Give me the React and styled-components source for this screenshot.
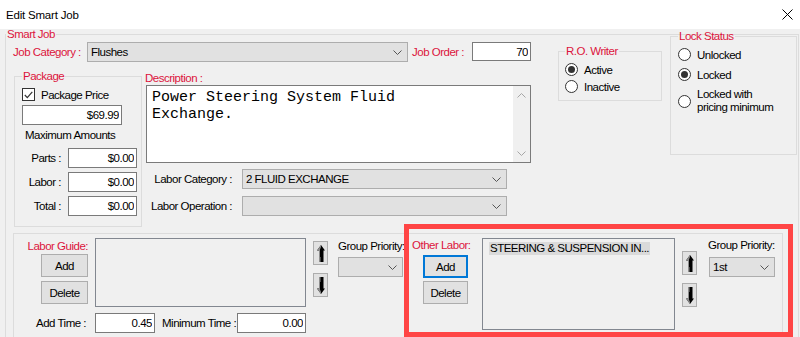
import React from "react";
import styled, { createGlobalStyle } from "styled-components";

const RED = "#dc143c";

const GlobalStyle = createGlobalStyle`
  body {
    margin: 0;
    background: #f0f0f0;
  }
  * {
    box-sizing: border-box;
  }
`;

const Window = styled.div`
  position: relative;
  width: 800px;
  height: 337px;
  overflow: hidden;
  background: #f0f0f0;
  font-family: "Liberation Sans", Arial, sans-serif;
  font-size: 11.5px;
  letter-spacing: -0.5px;
  color: #000;
  display: flex;
  flex-direction: column;
`;

const TitleBar = styled.div`
  flex: none;
  height: 29px;
  background: #fff;
  display: flex;
  align-items: center;
  justify-content: space-between;
  padding: 0 7px 0 6px;
  font-size: 11.5px;
  letter-spacing: -0.2px;
`;

const Body = styled.div`
  flex: 1;
  margin-top: -1px;
  padding-left: 5px;
`;

const GroupBox = styled.fieldset`
  flex: none;
  margin: ${({ $mt = 0, $ml = 0 }) => `${$mt}px 0 0 ${$ml}px`};
  padding: 0;
  min-width: 0;
  border: 1px solid #dcdcdc;
  width: ${({ $w }) => $w}px;
  height: ${({ $h }) => ($h ? `${$h}px` : "auto")};
`;

const Legend = styled.legend`
  padding: 0 1px;
  margin-left: ${({ $x }) => $x}px;
  line-height: 12px;
  color: ${RED};
`;

const OuterInner = styled.div`
  padding-left: 7px;
`;

const TopSection = styled.div`
  display: flex;
  align-items: flex-start;
`;

const LeftCol = styled.div`
  flex: none;
  width: 518px;
  display: flex;
  flex-direction: column;
`;

const JobRow = styled.div`
  margin-top: 2px;
  height: 20px;
  display: flex;
  align-items: center;
`;

const Label = styled.span`
  flex: none;
  line-height: 13px;
  white-space: nowrap;
  color: ${({ $red }) => ($red ? RED : "#000")};
  text-align: ${({ $right }) => ($right ? "right" : "left")};
  width: ${({ $w }) => ($w ? `${$w}px` : "auto")};
  margin-left: ${({ $ml = 0 }) => $ml}px;
  margin-top: ${({ $mt = 0 }) => $mt}px;
`;

const TextInput = styled.input`
  flex: none;
  width: ${({ $w }) => $w}px;
  height: ${({ $h = 20 }) => $h}px;
  margin: ${({ $mt = 0 }) => $mt}px 0 0 ${({ $ml = 0 }) => ($ml === "auto" ? "auto" : `${$ml}px`)};
  padding: 0 2px;
  border: 1px solid #7a7a7a;
  background: #fff;
  font: inherit;
  letter-spacing: inherit;
  color: #000;
  text-align: right;
  outline: none;
  align-self: ${({ $top }) => ($top ? "flex-start" : "auto")};
`;

const SelectBox = styled.div`
  flex: none;
  width: ${({ $w }) => $w}px;
  height: 20px;
  margin-top: ${({ $mt = 0 }) => $mt}px;
  margin-left: ${({ $ml = 0 }) => $ml}px;
  border: 1px solid #adadad;
  background: #e1e1e1;
  display: flex;
  align-items: center;
  padding: 0 5px 0 3px;
`;

const SelectValue = styled.span`
  flex: 1;
  white-space: nowrap;
  overflow: hidden;
`;

const Chevron = ({ down = true, color = "#555" }) => (
  <svg width="9" height="5" viewBox="0 0 9 5">
    <polyline
      points={down ? "0.5,0.5 4.5,4.5 8.5,0.5" : "0.5,4.5 4.5,0.5 8.5,4.5"}
      fill="none"
      stroke={color}
      strokeWidth="1"
    />
  </svg>
);

const Select = ({ w, value, mt, ml }) => (
  <SelectBox $w={w} $mt={mt} $ml={ml}>
    <SelectValue>{value}</SelectValue>
    <Chevron />
  </SelectBox>
);

const MidRow = styled.div`
  margin-top: 8px;
  display: flex;
  align-items: flex-start;
`;

const PackageInner = styled.div`
  padding-left: 7px;
  display: flex;
  flex-direction: column;
  align-items: flex-start;
`;

const CheckRow = styled.div`
  margin-top: 6px;
  display: flex;
  align-items: center;
  gap: 6px;
`;

const CheckBox = styled.span`
  flex: none;
  width: 13px;
  height: 13px;
  border: 1px solid #333;
  background: #fff;
  display: flex;
  align-items: center;
  justify-content: center;
`;

const AmountGrid = styled.div`
  margin-top: 6px;
  display: grid;
  grid-template-columns: 39px 69px;
  column-gap: 7px;
  row-gap: 4px;
  align-items: center;
`;

const DescCol = styled.div`
  flex: none;
  width: 386px;
  margin-left: 3px;
  display: flex;
  flex-direction: column;
`;

const DescBox = styled.div`
  margin-left: 1px;
  width: 385px;
  height: 78px;
  border: 1px solid #7a7a7a;
  background: #fff;
  display: flex;
`;

const DescText = styled.div`
  flex: 1;
  padding: 3px 0 0 5px;
  font-family: "Liberation Mono", "Courier New", monospace;
  font-size: 15px;
  line-height: 17px;
  letter-spacing: 0;
  white-space: pre-wrap;
`;

const ScrollTrack = styled.div`
  flex: none;
  width: 17px;
  background: #f0f0f0;
  display: flex;
  flex-direction: column;
  align-items: center;
  justify-content: space-between;
  padding: 7px 0 6px;
`;

const LaborGrid = styled.div`
  margin-top: 6px;
  display: grid;
  grid-template-columns: 87px 265px;
  column-gap: 10px;
  row-gap: 7px;
  align-items: center;
`;

const RadioInner = styled.div`
  padding: 6px 0 0 ${({ $pl }) => $pl}px;
  display: flex;
  flex-direction: column;
  gap: ${({ $gap }) => $gap}px;
`;

const RadioRow = styled.div`
  display: flex;
  align-items: center;
  gap: 6px;
`;

const Radio = styled.span`
  flex: none;
  width: 13px;
  height: 13px;
  border-radius: 50%;
  border: 1px solid #333;
  background: #fff;
  display: flex;
  align-items: center;
  justify-content: center;
  &::after {
    content: "";
    width: 7px;
    height: 7px;
    border-radius: 50%;
    background: ${({ $checked }) => ($checked ? "#333" : "transparent")};
  }
`;

const LowerGroup = styled.div`
  margin-top: 6px;
  width: 770px;
  height: 112px;
  border: 1px solid #dcdcdc;
  padding-top: 4px;
  display: flex;
  align-items: flex-start;
`;

const Cluster = styled.div`
  flex: none;
  display: flex;
  flex-direction: column;
  margin-left: ${({ $ml = 0 }) => $ml}px;
`;

const ClusterTop = styled.div`
  display: flex;
  align-items: flex-start;
`;

const ButtonCol = styled.div`
  flex: none;
  width: ${({ $w }) => $w}px;
  display: flex;
  flex-direction: column;
  align-items: ${({ $right }) => ($right ? "flex-end" : "flex-start")};
`;

const Button = styled.button`
  flex: none;
  width: ${({ $w }) => $w}px;
  height: 23px;
  margin: ${({ $mt = 0 }) => $mt}px 0 0 ${({ $ml = 0 }) => $ml}px;
  padding: 0;
  background: #e1e1e1;
  border: 1px solid ${({ $focused }) => ($focused ? "#0078d7" : "#adadad")};
  box-shadow: ${({ $focused }) => ($focused ? "inset 0 0 0 1px #0078d7" : "none")};
  font: inherit;
  letter-spacing: inherit;
  color: #000;
`;

const ListBox = styled.div`
  flex: none;
  width: ${({ $w }) => $w}px;
  height: ${({ $h }) => $h}px;
  margin-left: ${({ $ml }) => $ml}px;
  border: 1px solid #828790;
  background: #f0f0f0;
`;

const ListItem = styled.span`
  display: inline-block;
  margin: 3px 0 0 6px;
  padding: 0 1px;
  line-height: 13px;
  background: #dadada;
  white-space: nowrap;
`;

const ArrowCol = styled.div`
  flex: none;
  margin: ${({ $mt }) => $mt}px 0 0 7px;
  display: flex;
  flex-direction: column;
  gap: 8px;
`;

const ArrowButton = styled.div`
  width: 15px;
  height: 24px;
  background: #e1e1e1;
  border: 1px solid #adadad;
  display: flex;
  align-items: center;
  justify-content: center;
  svg {
    transform: ${({ $down }) => ($down ? "scaleY(-1)" : "none")};
  }
`;

const MoveArrow = ({ down }) => (
  <ArrowButton $down={down}>
    <svg width="8" height="17" viewBox="0 0 8 17">
      <path d="M4 0 L8 5.5 L6.5 5.5 L6.5 17 L2 17 L2 5.5 L0 5.5 Z" fill="#000" />
      <path d="M4 0 L0 5.5 L2 5.5 L2 17 L3.5 17 L3.5 12 L3 12 L3 4.5 L4 2 Z" fill="#8c8c8c" />
    </svg>
  </ArrowButton>
);

const PriorityCol = styled.div`
  flex: none;
  width: ${({ $w }) => $w}px;
  margin-left: ${({ $ml }) => $ml}px;
  display: flex;
  flex-direction: column;
`;

const TimeRow = styled.div`
  margin-top: 6px;
  width: 292px;
  display: flex;
  align-items: center;
`;

const Highlight = styled.div`
  position: absolute;
  left: 404px;
  top: 224px;
  width: 389px;
  height: 113px;
  border: 5px solid #ff4545;
  pointer-events: none;
`;

const CloseIcon = () => (
  <svg width="11" height="11" viewBox="0 0 11 11">
    <path d="M0.5 0.5 L10.5 10.5 M10.5 0.5 L0.5 10.5" stroke="#000" strokeWidth="1" />
  </svg>
);

export default function App() {
  return (
    <Window>
      <GlobalStyle />
      <TitleBar>
        <span>Edit Smart Job</span>
        <CloseIcon />
      </TitleBar>
      <Body>
        <GroupBox $w={794} $h={330}>
          <Legend $x={0}>Smart Job</Legend>
          <OuterInner>
            <TopSection>
              <LeftCol>
                <JobRow>
                  <Label $red $w={74}>Job Category :</Label>
                  <Select w={321} value="Flushes" />
                  <Label $red $w={60} $ml={4}>Job Order :</Label>
                  <TextInput $w={59} $h={19} $top readOnly value="70" />
                </JobRow>
                <MidRow>
                  <GroupBox $w={128} $h={157} $ml={1}>
                    <Legend $x={7}>Package</Legend>
                    <PackageInner>
                      <CheckRow>
                        <CheckBox>
                          <svg width="9" height="8" viewBox="0 0 9 8">
                            <polyline points="0.8,4 3.3,6.6 8.3,0.8" fill="none" stroke="#333" strokeWidth="1.2" />
                          </svg>
                        </CheckBox>
                        <span>Package Price</span>
                      </CheckRow>
                      <TextInput $w={100} $mt={4} readOnly value="$69.99" />
                      <Label $ml={3} $mt={4}>Maximum Amounts</Label>
                      <AmountGrid>
                        <Label $right>Parts :</Label>
                        <TextInput $w={69} readOnly value="$0.00" />
                        <Label $right>Labor :</Label>
                        <TextInput $w={69} readOnly value="$0.00" />
                        <Label $right>Total :</Label>
                        <TextInput $w={69} readOnly value="$0.00" />
                      </AmountGrid>
                    </PackageInner>
                  </GroupBox>
                  <DescCol>
                    <Label $red $mt={2}>Description :</Label>
                    <DescBox>
                      <DescText>{"Power Steering System Fluid\nExchange."}</DescText>
                      <ScrollTrack>
                        <Chevron down={false} color="#a6a6a6" />
                        <Chevron color="#a6a6a6" />
                      </ScrollTrack>
                    </DescBox>
                    <LaborGrid>
                      <Label $right>Labor Category :</Label>
                      <Select w={265} value="2 FLUID EXCHANGE" />
                      <Label $right>Labor Operation :</Label>
                      <Select w={265} value="" />
                    </LaborGrid>
                  </DescCol>
                </MidRow>
              </LeftCol>

              <GroupBox $w={104} $h={56} $ml={27} $mt={5}>
                <Legend $x={6}>R.O. Writer</Legend>
                <RadioInner $pl={6} $gap={4}>
                  <RadioRow>
                    <Radio $checked />
                    <span>Active</span>
                  </RadioRow>
                  <RadioRow>
                    <Radio />
                    <span>Inactive</span>
                  </RadioRow>
                </RadioInner>
              </GroupBox>

              <GroupBox $w={127} $h={125} $ml={8} $mt={-10}>
                <Legend $x={7}>Lock Status</Legend>
                <RadioInner $pl={7} $gap={7}>
                  <RadioRow>
                    <Radio />
                    <span>Unlocked</span>
                  </RadioRow>
                  <RadioRow>
                    <Radio $checked />
                    <span>Locked</span>
                  </RadioRow>
                  <RadioRow>
                    <Radio />
                    <Label>
                      Locked with
                      <br />
                      pricing minimum
                    </Label>
                  </RadioRow>
                </RadioInner>
              </GroupBox>
            </TopSection>

            <LowerGroup>
              <Cluster>
                <ClusterTop>
                  <ButtonCol $w={74} $right>
                    <Label $red $mt={2}>Labor Guide:</Label>
                    <Button $w={47} $mt={1}>Add</Button>
                    <Button $w={47} $mt={4}>Delete</Button>
                  </ButtonCol>
                  <ListBox $w={211} $h={69} $ml={7} />
                  <ArrowCol $mt={3}>
                    <MoveArrow />
                    <MoveArrow down />
                  </ArrowCol>
                  <PriorityCol $w={65} $ml={10}>
                    <Label $mt={2}>Group Priority:</Label>
                    <Select w={65} value="" mt={4} />
                  </PriorityCol>
                </ClusterTop>
                <TimeRow>
                  <Label $right $w={72}>Add Time :</Label>
                  <TextInput $w={60} $ml={9} readOnly value="0.45" />
                  <Label $ml={7}>Minimum Time :</Label>
                  <TextInput $w={69} $ml="auto" readOnly value="0.00" />
                </TimeRow>
              </Cluster>

              <Cluster $ml={9}>
                <ClusterTop>
                  <ButtonCol $w={59}>
                    <Label $red $mt={1}>Other Labor:</Label>
                    <Button $w={45} $ml={11} $mt={3} $focused>Add</Button>
                    <Button $w={45} $ml={11} $mt={3}>Delete</Button>
                  </ButtonCol>
                  <ListBox $w={193} $h={92} $ml={11}>
                    <ListItem>STEERING &amp; SUSPENSION IN...</ListItem>
                  </ListBox>
                  <ArrowCol $mt={13}>
                    <MoveArrow />
                    <MoveArrow down />
                  </ArrowCol>
                  <PriorityCol $w={67} $ml={11}>
                    <Label $mt={1}>Group Priority:</Label>
                    <Select w={66} value="1st" mt={5} ml={1} />
                  </PriorityCol>
                </ClusterTop>
              </Cluster>
            </LowerGroup>
          </OuterInner>
        </GroupBox>
      </Body>
      <Highlight />
    </Window>
  );
}
